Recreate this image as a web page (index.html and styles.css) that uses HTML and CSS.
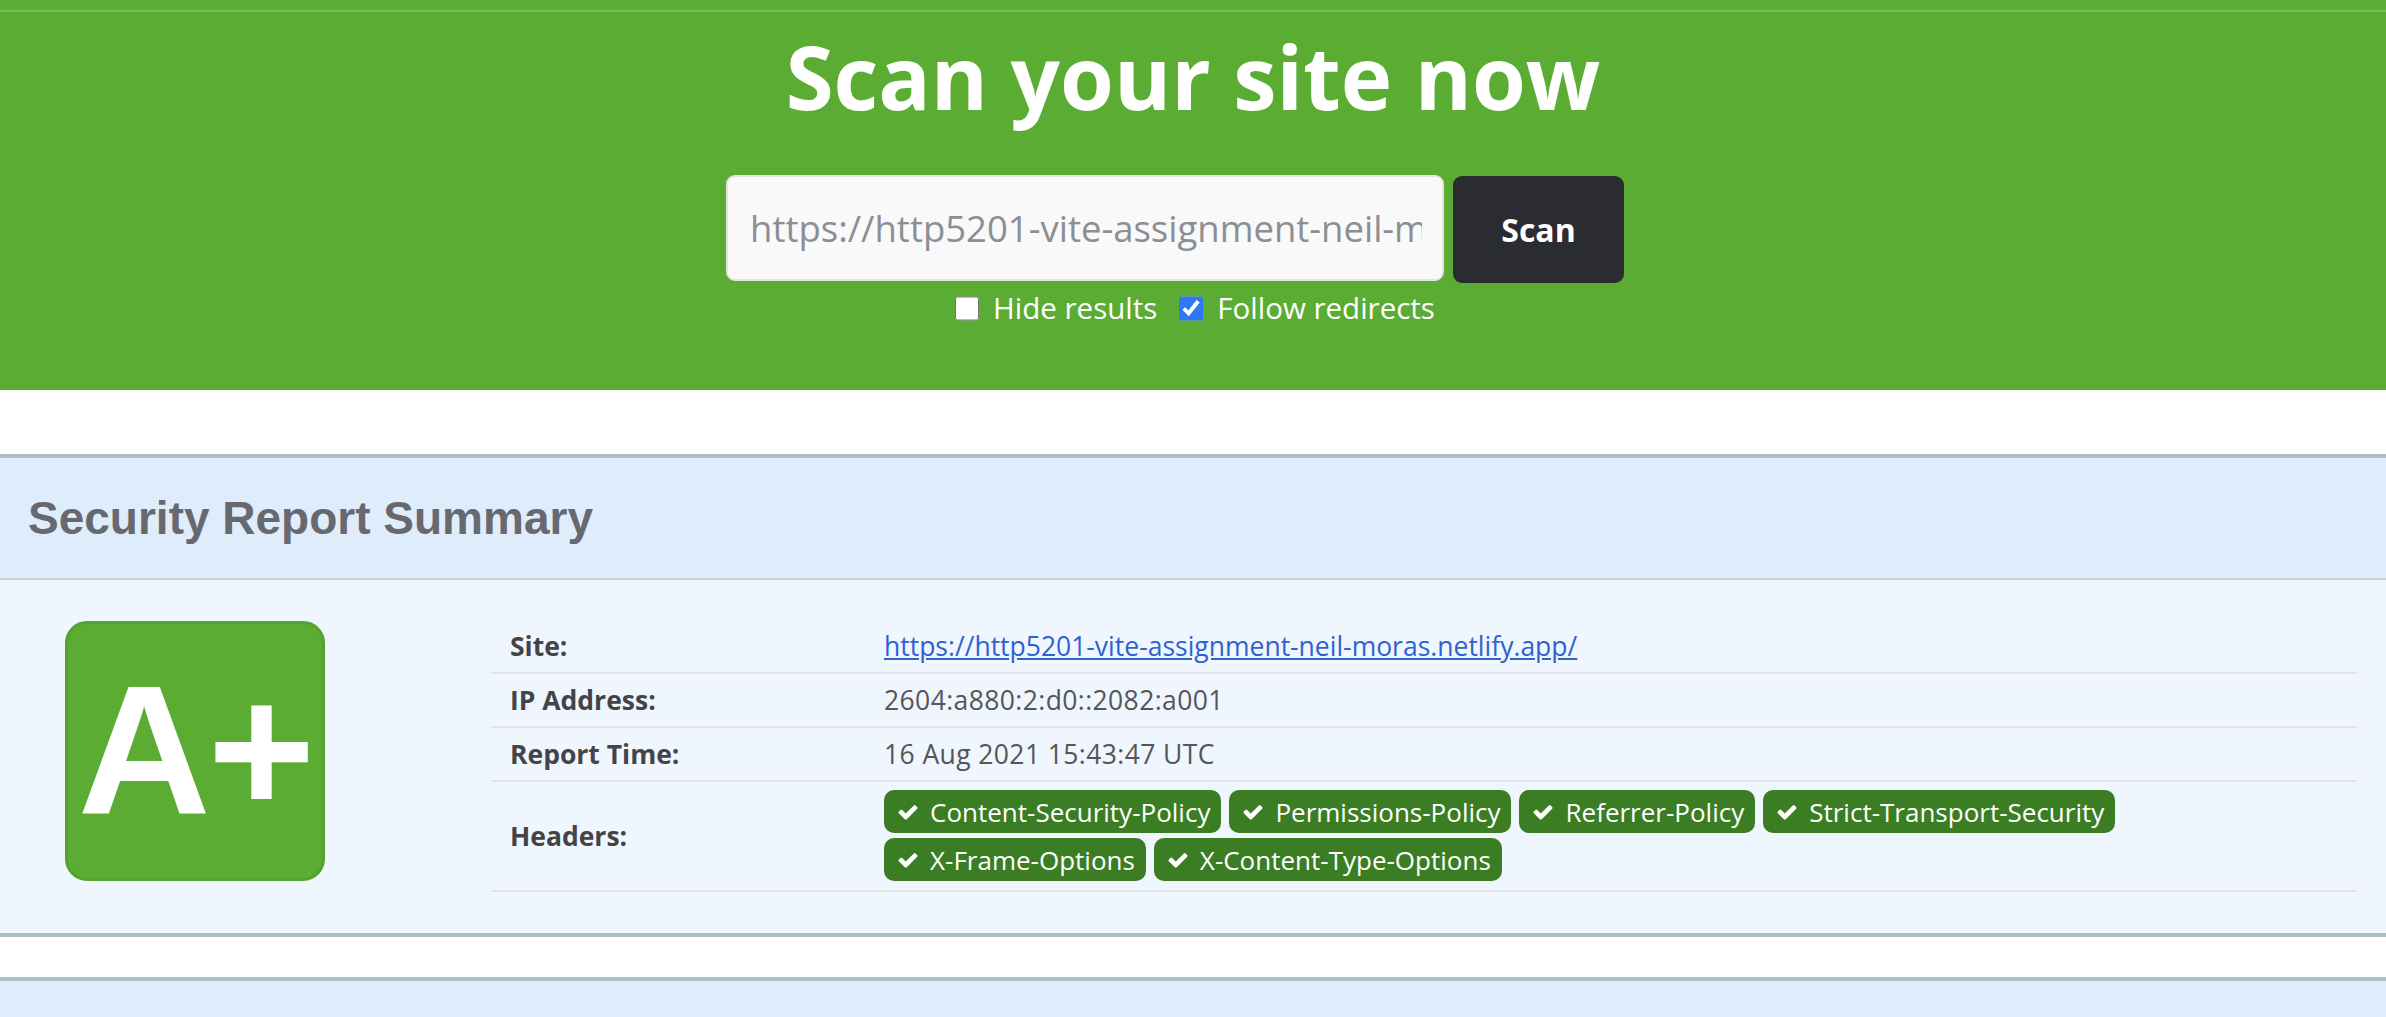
FILE: index.html
```html
<!DOCTYPE html>
<html lang="en">
<head>
<meta charset="utf-8">
<title>Scan your site now</title>
<link rel="stylesheet" href="styles.css">
</head>
<body>
<div class="topbar"></div>
<section class="hero">
  <h1 class="hero-title">Scan your site now</h1>
  <form class="scan-form" onsubmit="return false">
    <input class="scan-input" type="text" placeholder="https://http5201-vite-assignment-neil-moras.netlify.app/">
    <button class="scan-btn" type="submit">Scan</button>
  </form>
  <div class="options">
    <label class="option"><input type="checkbox" class="opt-box"> Hide results</label>
    <label class="option"><input type="checkbox" class="opt-box" checked> Follow redirects</label>
  </div>
</section>

<section class="report">
  <div class="report-head"><h2 class="report-title">Security Report Summary</h2></div>
  <div class="report-body">
    <div class="grade-col"><div class="grade">A+</div></div>
    <table class="summary">
      <tr><th class="label">Site:</th><td class="value"><a class="site-link" href="#">https://http5201-vite-assignment-neil-moras.netlify.app/</a></td></tr>
      <tr><th class="label">IP Address:</th><td class="value digits">2604:a880:2:d0::2082:a001</td></tr>
      <tr><th class="label">Report Time:</th><td class="value digits">16 Aug 2021 15:43:47 UTC</td></tr>
      <tr><th class="label">Headers:</th><td class="value badges-cell">
        <div class="badges">
          <span class="badge"><svg class="chk" viewBox="0 0 1792 1792"><path d="M1671 566q0 40-28 68l-724 724-136 136q-28 28-68 28t-68-28l-136-136-362-362q-28-28-28-68t28-68l136-136q28-28 68-28t68 28l294 295 656-657q28-28 68-28t68 28l136 136q28 28 28 68z"/></svg>Content-Security-Policy</span>
          <span class="badge"><svg class="chk" viewBox="0 0 1792 1792"><path d="M1671 566q0 40-28 68l-724 724-136 136q-28 28-68 28t-68-28l-136-136-362-362q-28-28-28-68t28-68l136-136q28-28 68-28t68 28l294 295 656-657q28-28 68-28t68 28l136 136q28 28 28 68z"/></svg>Permissions-Policy</span>
          <span class="badge"><svg class="chk" viewBox="0 0 1792 1792"><path d="M1671 566q0 40-28 68l-724 724-136 136q-28 28-68 28t-68-28l-136-136-362-362q-28-28-28-68t28-68l136-136q28-28 68-28t68 28l294 295 656-657q28-28 68-28t68 28l136 136q28 28 28 68z"/></svg>Referrer-Policy</span>
          <span class="badge"><svg class="chk" viewBox="0 0 1792 1792"><path d="M1671 566q0 40-28 68l-724 724-136 136q-28 28-68 28t-68-28l-136-136-362-362q-28-28-28-68t28-68l136-136q28-28 68-28t68 28l294 295 656-657q28-28 68-28t68 28l136 136q28 28 28 68z"/></svg>Strict-Transport-Security</span>
          <span class="badge"><svg class="chk" viewBox="0 0 1792 1792"><path d="M1671 566q0 40-28 68l-724 724-136 136q-28 28-68 28t-68-28l-136-136-362-362q-28-28-28-68t28-68l136-136q28-28 68-28t68 28l294 295 656-657q28-28 68-28t68 28l136 136q28 28 28 68z"/></svg>X-Frame-Options</span>
          <span class="badge"><svg class="chk" viewBox="0 0 1792 1792"><path d="M1671 566q0 40-28 68l-724 724-136 136q-28 28-68 28t-68-28l-136-136-362-362q-28-28-28-68t28-68l136-136q28-28 68-28t68 28l294 295 656-657q28-28 68-28t68 28l136 136q28 28 28 68z"/></svg>X-Content-Type-Options</span>
        </div>
      </td></tr>
    </table>
  </div>
</section>

<section class="report next">
  <div class="report-head"></div>
</section>
</body>
</html>
```

FILE: styles.css
```css
* { box-sizing: border-box; }

body {
  margin: 0;
  background: #ffffff;
  font-family: "Open Sans", "Noto Sans", sans-serif;
}

.topbar {
  height: 10px;
  background: #5bac33;
}

.hero {
  background: #5bac33;
  border-top: 2px solid #79bb5b;
  padding: 16px 0 0;
  height: 380px;
}

.hero-title {
  margin: 0;
  color: #ffffff;
  font: 700 87px/96px "Open Sans", sans-serif;
  text-align: center;
}

.scan-form {
  width: 934px;
  margin: 51px auto 0;
  display: flex;
  gap: 9px;
  align-items: flex-start;
}

.scan-input {
  width: 718px;
  height: 106px;
  border: 2px solid #e4e4e4;
  border-radius: 9px;
  background: #f9f9f9;
  padding: 0 20px 0 22px;
  font: 400 36.5px "Open Sans", sans-serif;
  color: #8b8e94;
  outline: none;
}

.scan-input::placeholder { color: #8b8e94; }

.scan-btn {
  margin-top: 1px;
  width: 171px;
  height: 107px;
  border: none;
  border-radius: 9px;
  background: #2b2c31;
  color: #ffffff;
  font: 700 32px "Open Sans", sans-serif;
}

.options {
  display: flex;
  justify-content: center;
  gap: 22px;
  margin-top: 6px;
  padding-left: 4px;
  color: #ffffff;
  font: 400 29.5px/38px "Open Sans", sans-serif;
}

.option {
  display: flex;
  align-items: center;
  gap: 14px;
}

.opt-box {
  width: 24px;
  height: 25px;
  margin: 0;
  accent-color: #2f78f5;
}

.report {
  margin-top: 64px;
  border-top: 4px solid #adbfc4;
  border-bottom: 4px solid #adbfc4;
}

.report.next {
  margin-top: 40px;
}

.report-head {
  height: 122px;
  background: #dfecfb;
  border-bottom: 2px solid #c6d4dc;
  display: flex;
  align-items: center;
  padding-left: 28px;
}

.report-title {
  margin: 0;
  font: 700 46px/56px "Liberation Sans", Arial, sans-serif;
  color: #68686f;
}

.report-body {
  background: #eff6fe;
  display: grid;
  grid-template-columns: 390px 1fr;
  padding: 40px 29px 41px 0;
}

.grade-col {
  display: flex;
  justify-content: center;
  padding-top: 1px;
}

.grade {
  width: 260px;
  height: 260px;
  background: #5bac33;
  border: 3px solid #55a22e;
  border-radius: 22px;
  color: #ffffff;
  font: 700 184px/250px "Liberation Sans", Arial, sans-serif;
  text-align: center;
  letter-spacing: -3px;
}

.summary {
  margin-left: 101px;
  width: calc(100% - 101px);
  border-collapse: collapse;
}

.summary th,
.summary td {
  border-bottom: 2px solid #e1e4e8;
  text-align: left;
  vertical-align: middle;
  font-size: 26.5px;
  line-height: 28px;
}

.label {
  width: 393px;
  padding: 12px 0 12px 19px;
  font-weight: 700;
  color: #444448;
}

.value {
  padding: 12px 0;
  color: #555559;
}

.value.digits {
  letter-spacing: 0.4px;
}

.site-link {
  color: #2f62d0;
  text-decoration: underline;
}

.summary .badges-cell {
  padding: 8px 0 9px;
}

.badges {
  display: flex;
  flex-wrap: wrap;
  gap: 5px 8px;
}

.badge {
  display: inline-flex;
  align-items: center;
  gap: 11px;
  height: 43px;
  padding: 0 11px 0 13px;
  background: #3a7d23;
  border-radius: 10px;
  color: #ffffff;
  font-size: 26px;
  line-height: 30px;
}

.chk {
  width: 22px;
  height: 22px;
  fill: #ffffff;
}
```
